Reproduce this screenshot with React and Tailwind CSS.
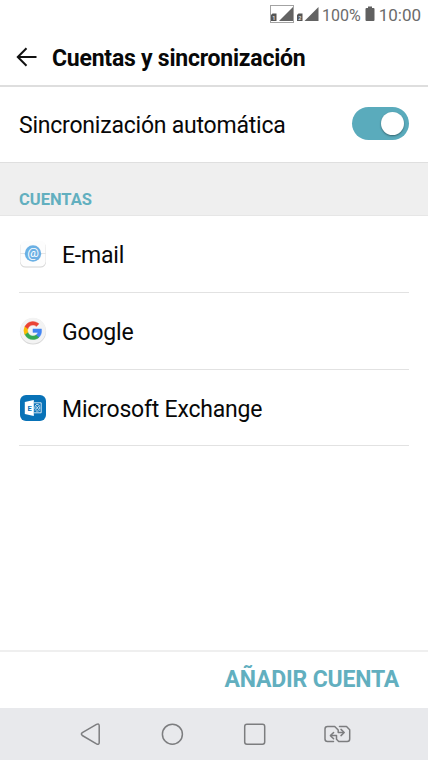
import React from "react";

function StatusBar() {
  return (
    <div className="flex h-[30px] shrink-0 items-center justify-end pr-[7px] text-[#6b6b6b]">
      <svg width="50" height="20" viewBox="0 0 50 20" className="mr-[2px] block">
        <rect x="0.500" y="0.500" width="23" height="17" fill="none" stroke="#a3a3a3" />
        <path d="M23 2v14H9z" fill="#636363" />
        <path d="M1 16v-6l1.500-1.500H6.500v7.500z" fill="#555" />
        <text x="2.200" y="14.500" fontSize="5.500" fontWeight="700" fill="#ddd">1</text>
        <path d="M48.500 2v14h-14z" fill="#636363" />
        <path d="M27 16v-6l1.500-1.500h4v7.500z" fill="#555" />
        <text x="28.200" y="14.500" fontSize="5.500" fontWeight="700" fill="#ddd">2</text>
      </svg>
      <span className="pt-px text-[16px] leading-[20px]">100%</span>
      <svg width="10" height="16" viewBox="0 0 10 16" className="ml-[4px] mr-[4px] block -translate-y-px">
        <path d="M3 0.500h4v1.500h1.500q1 0 1 1V14q0 1-1 1H1.500q-1 0-1-1V3q0-1 1-1H3z" fill="#606060" />
      </svg>
      <span className="text-[17px] leading-[20px]">10:00</span>
    </div>
  );
}

function EmailIcon() {
  return (
    <svg width="28" height="28" viewBox="0 0 28 28">
      <rect x="1" y="1.800" width="26" height="25.700" rx="5.500" fill="#d2d2d2" />
      <rect x="1.300" y="0.800" width="25.400" height="25.600" rx="5.200" fill="#fdfdfd" />
      <path d="M1.300 13.500h25.400" stroke="#dedede" strokeWidth="0.800" />
      <circle cx="14" cy="13.500" r="8.200" fill="#6bb0e4" />
      <text x="14" y="17.300" textAnchor="middle" fontSize="13" fill="#fff">@</text>
    </svg>
  );
}

function GoogleIcon() {
  return (
    <svg width="28" height="28" viewBox="0 0 28 28">
      <circle cx="14" cy="14.400" r="13.100" fill="#d8d8d8" />
      <circle cx="14" cy="13.600" r="12.900" fill="#f3f3f3" />
      <g transform="translate(4.100 3.700) scale(.82)">
        <path fill="#4285f4" stroke="#4285f4" strokeWidth=".5" d="M22.560 12.250c0-.78-.07-1.530-.2-2.250H12v4.260h5.920a5.060 5.060 0 0 1-2.200 3.320v2.770h3.570c2.080-1.920 3.270-4.740 3.270-8.100z" />
        <path fill="#34a853" stroke="#34a853" strokeWidth=".5" d="M12 23c2.970 0 5.460-.98 7.280-2.660l-3.570-2.770c-.98.660-2.230 1.060-3.710 1.060-2.860 0-5.290-1.930-6.160-4.530H2.180v2.840A11 11 0 0 0 12 23z" />
        <path fill="#fbbc05" stroke="#fbbc05" strokeWidth=".5" d="M5.840 14.090a6.600 6.600 0 0 1 0-4.180V7.070H2.180a11 11 0 0 0 0 9.860z" />
        <path fill="#ea4335" stroke="#ea4335" strokeWidth=".5" d="M12 5.380c1.620 0 3.060.56 4.210 1.640l3.150-3.150A11 11 0 0 0 2.180 7.070l3.660 2.840C6.710 7.310 9.140 5.380 12 5.380z" />
      </g>
    </svg>
  );
}

function ExchangeIcon() {
  return (
    <svg width="28" height="28" viewBox="0 0 28 28">
      <rect x="1" y="1" width="26" height="26" rx="6" fill="#0872b7" />
      <path d="M15 8.800h7.200v10H15" fill="none" stroke="#e6f1f8" strokeWidth="0.900" />
      <path d="M16 11l4.600 5.600m0-5.600l-4.600 5.600M17 10.600h2.600m-2.600 6.400h2.600M15.900 12.400v2.800m4.800-2.800v2.800" fill="none" stroke="#d7e9f5" strokeWidth="0.900" />
      <path d="M5.800 8L14.800 6v16l-9-2z" fill="#fff" />
      <text x="8.400" y="16.700" fontSize="7.500" fontWeight="700" fill="#0872b7">E</text>
    </svg>
  );
}

const accounts = [
  { name: "E-mail", Icon: EmailIcon, height: "h-[77px]" },
  { name: "Google", Icon: GoogleIcon, height: "h-[77px]" },
  { name: "Microsoft Exchange", Icon: ExchangeIcon, height: "h-[76px]" },
];

function NavBar() {
  return (
    <nav className="h-[52px] shrink-0 bg-[#e8e9ec]">
      <svg width="428" height="52" viewBox="0 0 428 52" fill="none" stroke="#7c7d7f" strokeWidth="1.500" strokeLinecap="round" strokeLinejoin="round">
        <path d="M82.300 24.700L96.500 16.400Q99.200 15 99.200 17.800V34.500Q99.200 37.200 96.500 35.800L82.300 27.500Q80.500 26.100 82.300 24.700z" />
        <circle cx="172.400" cy="26.200" r="10" />
        <rect x="244.700" y="16.200" width="20" height="20" rx="2.200" />
        <path d="M333.500 33.500h-6q-2.500 0-2.500-2.500V21q0-2.500 2.500-2.500h7.200l3.500 3.500v2.500h5.300" />
        <path d="M341 21.400l3.200 3.100-3.200 3.100" />
        <path d="M339.500 18.500h7l3.200 3.200V31q0 2.500-2.500 2.500h-8.500l-2.200-2.200v-3.700h-5.300" />
        <path d="M333.600 24.500l-3.200 3.100 3.200 3.100" />
      </svg>
    </nav>
  );
}

export default function App() {
  return (
    <div className="flex h-[760px] w-[428px] flex-col overflow-hidden bg-white font-[Roboto,sans-serif] text-[#080808]">
      <StatusBar />
      <header className="flex h-[57px] shrink-0 items-center border-b-2 border-[#dedede] pb-[2px] pl-[16px]">
        <svg width="21" height="20" viewBox="0 0 21 20" fill="none" stroke="#111" strokeWidth="2">
          <path d="M20.500 10H2M10.500 1.300L1.800 10l8.700 8.700" />
        </svg>
        <h1 className="ml-[15px] whitespace-nowrap pt-[5px] text-[23px] font-bold leading-[28px] tracking-[-0.23px]">Cuentas y sincronización</h1>
      </header>
      <div className="flex h-[75px] shrink-0 items-center justify-between pl-[19px] pr-[19px]">
        <span className="whitespace-nowrap pt-[2px] text-[23px] leading-[28px] tracking-[-0.22px]">Sincronización automática</span>
        <div className="mb-[2px] flex h-[33px] w-[57px] items-center justify-end rounded-full bg-[#5aabbc] pr-[5px]">
          <div className="h-[23px] w-[23px] rounded-full bg-white shadow-[0_1px_2px_rgba(0,0,0,0.4)]" />
        </div>
      </div>
      <div className="h-[54px] shrink-0 border-b border-t border-b-[#e6e6e6] border-t-[#dfdfdf] bg-[#efefef] pl-[19px] pt-[27px]">
        <h2 className="text-[16.5px] font-bold leading-[20px] text-[#62afbf]">CUENTAS</h2>
      </div>
      <ul className="px-[19px]">
        {accounts.map(({ name, Icon, height }) => (
          <li key={name} className={`flex items-center border-b border-[#e2e2e2] ${height}`}>
            <Icon />
            <span className="ml-[15px] whitespace-nowrap pt-[4px] text-[23px] leading-[28px] tracking-[-0.2px]">{name}</span>
          </li>
        ))}
      </ul>
      <div className="mt-auto flex h-[58px] shrink-0 items-center justify-end border-t-2 border-[#efefef] pr-[29px]">
        <button className="whitespace-nowrap text-[23px] font-bold leading-[28px] tracking-[-0.2px] text-[#62afbf]">AÑADIR CUENTA</button>
      </div>
      <NavBar />
    </div>
  );
}
